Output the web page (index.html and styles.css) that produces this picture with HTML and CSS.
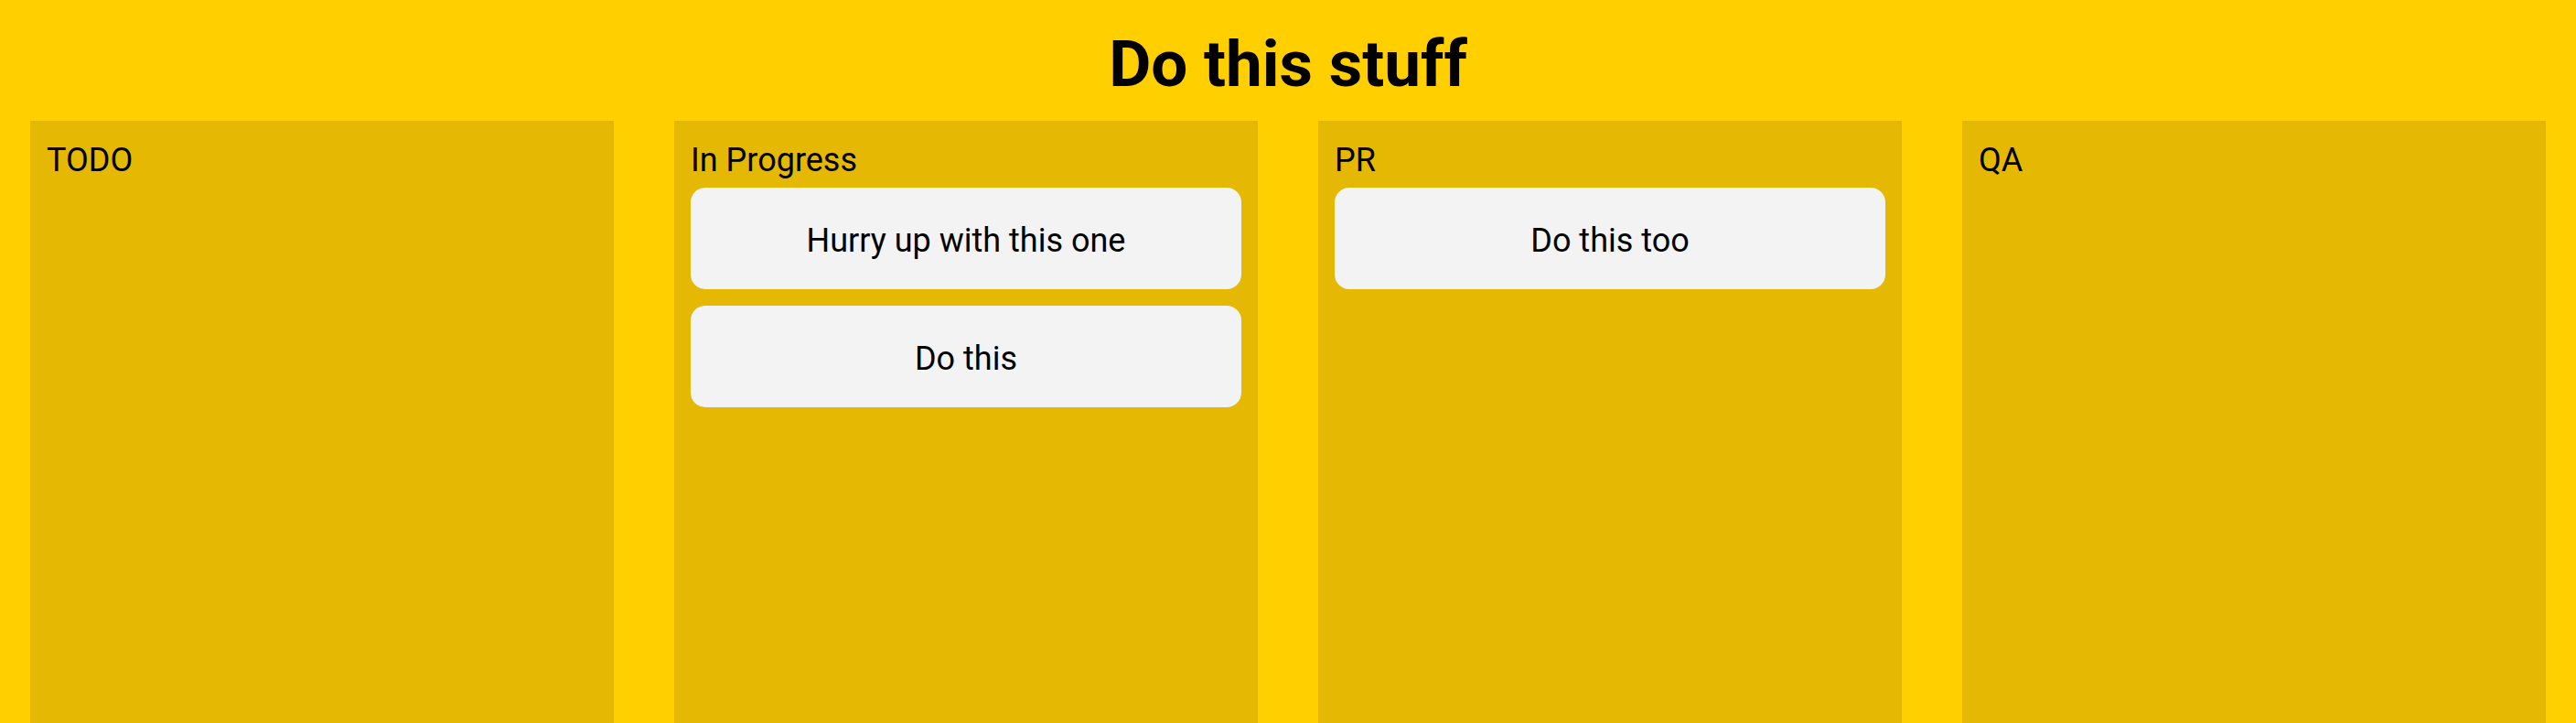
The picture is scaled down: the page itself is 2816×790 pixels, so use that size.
FILE: index.html
```html
<!DOCTYPE html>
<html lang="en">
<head>
<meta charset="utf-8">
<title>Do this stuff</title>
<link rel="stylesheet" href="styles.css">
</head>
<body>
<div class="page">
  <header class="header">
    <h1 class="title">Do this stuff</h1>
  </header>
  <main class="board">
    <section class="column">
      <h2 class="column-title">TODO</h2>
    </section>
    <section class="column">
      <h2 class="column-title">In Progress</h2>
      <div class="card">Hurry up with this one</div>
      <div class="card">Do this</div>
    </section>
    <section class="column">
      <h2 class="column-title">PR</h2>
      <div class="card">Do this too</div>
    </section>
    <section class="column">
      <h2 class="column-title">QA</h2>
    </section>
  </main>
</div>
</body>
</html>
```
FILE: styles.css
```css
* {
  box-sizing: border-box;
}

html, body {
  margin: 0;
  padding: 0;
  height: 100%;
}

body {
  background: #ffcf00;
  font-family: Roboto, "Liberation Sans", sans-serif;
  color: #000;
}

.page {
  min-height: 100vh;
  display: flex;
  flex-direction: column;
}

.header {
  padding: 28px 0 20px;
  text-align: center;
}

.title {
  margin: 0;
  font-size: 71px;
  font-weight: 700;
  line-height: 84px;
}

.board {
  flex: 1;
  display: flex;
  gap: 66px;
  padding: 0 33px;
}

.column {
  flex: 1;
  background: #e5b903;
  padding: 22px 18px 18px;
  display: flex;
  flex-direction: column;
  gap: 18px;
}

.column-title {
  margin: 0 0 -9px;
  font-size: 36px;
  font-weight: 400;
  line-height: 42px;
}

.card {
  background: #f3f3f3;
  border-radius: 16px;
  padding: 37px 16px 32px;
  font-size: 36px;
  line-height: 42px;
  text-align: center;
}
```
